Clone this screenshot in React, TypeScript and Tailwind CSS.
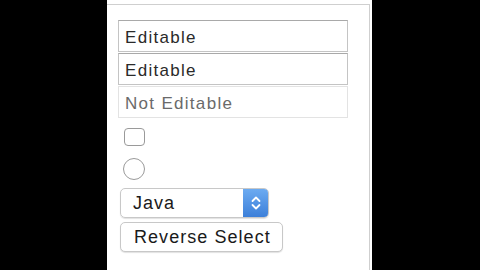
import React from "react";

const font = { fontFamily: '"Liberation Sans", Arial, sans-serif' };

export default function App() {
  return (
    <div className="w-[480px] h-[270px] bg-black flex overflow-hidden" style={font}>
      <div className="ml-[107px] w-[265px] h-full bg-white pt-[4px] pr-[2px] flex">
        <div className="flex-1 border-t border-r border-[#cfcfcf] pt-[15px] pl-[11px] flex flex-col items-start">
          <div className="w-[230px] h-[32px] border border-[#c4c4c4] border-t-[#a9a9a9] flex items-center pl-[6px] pt-[3px] text-[17px] tracking-[1.3px] text-[#2a2a2a]">
            Editable
          </div>
          <div className="mt-px w-[230px] h-[32px] border border-[#c4c4c4] border-t-[#a9a9a9] flex items-center pl-[6px] pt-[3px] text-[17px] tracking-[1.3px] text-[#2a2a2a]">
            Editable
          </div>
          <div className="mt-px w-[230px] h-[32px] border border-[#e3e3e3] flex items-center pl-[6px] pt-[3px] text-[17px] tracking-[1.3px] text-[#6a6a6a]">
            Not Editable
          </div>
          <div className="mt-[10px] ml-[6px] w-[21px] h-[18px] rounded-[4px] border border-[#9a9a9a] bg-white" />
          <div className="mt-[12px] ml-[5px] w-[22px] h-[22px] rounded-full border border-[#9a9a9a] bg-white" />
          <div className="mt-[8px] ml-[2px] w-[149px] h-[30px] rounded-[5px] border border-[#c8c8c8] flex overflow-hidden shadow-[0_1px_1px_rgba(0,0,0,0.12)]">
            <div className="flex-1 flex items-center pl-[12px] pt-px text-[18px] tracking-[1px] text-[#1a1a1a]">
              Java
            </div>
            <div className="w-[25px] h-full bg-gradient-to-b from-[#6cabf1] to-[#3c7fd9] flex items-center justify-center">
              <svg width="12" height="18" viewBox="0 0 12 18" fill="none" stroke="#ffffff" strokeWidth="1.8" strokeLinecap="round" strokeLinejoin="round">
                <path d="M2.5 7 L6 3.5 L9.5 7" />
                <path d="M2.5 11 L6 14.5 L9.5 11" />
              </svg>
            </div>
          </div>
          <div className="mt-[4px] ml-[2px] w-[163px] h-[30px] rounded-[5px] border border-[#c8c8c8] bg-white flex items-center pl-[13px] text-[18px] tracking-[1.05px] text-[#1a1a1a] shadow-[0_1px_1px_rgba(0,0,0,0.12)]">
            Reverse Select
          </div>
        </div>
      </div>
    </div>
  );
}
